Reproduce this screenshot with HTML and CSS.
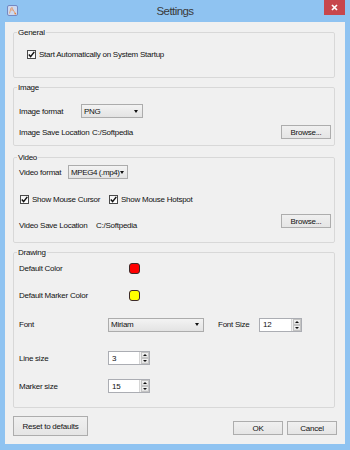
FILE: index.html
```html
<!DOCTYPE html>
<html>
<head>
<meta charset="utf-8">
<title>Settings</title>
<link rel="stylesheet" href="styles.css">
</head>
<body>
<div class="window">
  <div class="titlebar">
    <span class="app-icon">
      <svg width="11" height="11" viewBox="0 0 11 11">
        <rect x="0.5" y="0.5" width="10" height="10" rx="1.5" fill="#cdd9ef" stroke="#7488c2"/>
        <path d="M2.5 8.5 L4 3 L5.5 2.5 M4 5 L6 5 M5 3 L8 8" fill="none" stroke="#e59a6a" stroke-width="0.9"/>
        <circle cx="8.3" cy="8.6" r="0.9" fill="#e8833a"/>
      </svg>
    </span>
    <span class="title">Settings</span>
    <span class="close">
      <svg width="7" height="7" viewBox="0 0 7 7"><path d="M1 1 L6 6 M6 1 L1 6" stroke="#fff" stroke-width="1.7"/></svg>
    </span>
  </div>
  <div class="client">
    <fieldset class="group g-general">
      <legend>General</legend>
      <div class="row indent">
        <span class="check"><svg width="7" height="7" viewBox="0 0 7 7"><path d="M0.8 3.6 L2.6 5.6 L6.3 0.9" fill="none" stroke="#111" stroke-width="1.5"/></svg></span>
        <span>Start Automatically on System Startup</span>
      </div>
    </fieldset>

    <fieldset class="group g-image">
      <legend>Image</legend>
      <div class="row">
        <span class="lbl w62">Image format</span>
        <span class="combo w62"><span>PNG</span><span class="arrow"></span></span>
      </div>
      <div class="row r-gap7">
        <span class="lbl w73">Image Save Location</span>
        <span>C:/Softpedia</span>
        <span class="btn push">Browse...</span>
      </div>
    </fieldset>

    <fieldset class="group g-video">
      <legend>Video</legend>
      <div class="row">
        <span class="lbl w49">Video format</span>
        <span class="combo w60 tight"><span>MPEG4 (.mp4)</span><span class="arrow"></span></span>
      </div>
      <div class="row r-gap13 indent1">
        <span class="checkitem w89">
          <span class="check"><svg width="7" height="7" viewBox="0 0 7 7"><path d="M0.8 3.6 L2.6 5.6 L6.3 0.9" fill="none" stroke="#111" stroke-width="1.5"/></svg></span>
          <span>Show Mouse Cursor</span>
        </span>
        <span class="checkitem">
          <span class="check"><svg width="7" height="7" viewBox="0 0 7 7"><path d="M0.8 3.6 L2.6 5.6 L6.3 0.9" fill="none" stroke="#111" stroke-width="1.5"/></svg></span>
          <span>Show Mouse Hotspot</span>
        </span>
      </div>
      <div class="row row-top r-gap8">
        <span class="lbl w77 low">Video Save Location</span>
        <span class="low">C:/Softpedia</span>
        <span class="btn push">Browse...</span>
      </div>
    </fieldset>

    <fieldset class="group g-drawing">
      <legend>Drawing</legend>
      <div class="row">
        <span class="lbl w110">Default Color</span>
        <span class="swatch red"></span>
      </div>
      <div class="row r-gap13">
        <span class="lbl w110">Default Marker Color</span>
        <span class="swatch yellow"></span>
      </div>
      <div class="row h15 r-gap15">
        <span class="lbl w89">Font</span>
        <span class="combo w96 h15"><span>Miriam</span><span class="arrow"></span></span>
        <span class="lbl fontsize">Font Size</span>
        <span class="spin w43 h15"><span class="val">12</span><span class="btns"><span class="up"></span><span class="down"></span></span></span>
      </div>
      <div class="row r-gap19">
        <span class="lbl w89">Line size</span>
        <span class="spin w42"><span class="val">3</span><span class="btns"><span class="up"></span><span class="down"></span></span></span>
      </div>
      <div class="row r-gap14">
        <span class="lbl w89">Marker size</span>
        <span class="spin w42"><span class="val">15</span><span class="btns"><span class="up"></span><span class="down"></span></span></span>
      </div>
    </fieldset>

    <div class="actions">
      <span class="btn reset">Reset to defaults</span>
      <span class="btn ok">OK</span>
      <span class="btn cancel">Cancel</span>
    </div>
  </div>
</div>
</body>
</html>
```

FILE: styles.css
```css
* { box-sizing: border-box; }
html, body { margin: 0; padding: 0; }
body {
  width: 350px;
  height: 450px;
  overflow: hidden;
  font-family: "Liberation Sans", Arial, sans-serif;
  font-size: 8px;
  letter-spacing: -0.25px;
  color: #111;
}
.window {
  width: 350px;
  height: 450px;
  background: #8fc3f1;
  display: flex;
  flex-direction: column;
}
.titlebar {
  height: 22px;
  display: grid;
  grid-template-columns: 1fr auto 1fr;
}
.app-icon {
  justify-self: start;
  margin: 5px 0 0 7px;
  width: 11px;
  height: 11px;
  display: flex;
}
.title {
  font-size: 11.5px;
  letter-spacing: -0.55px;
  color: #3a3a3a;
  line-height: 22px;
}
.close {
  justify-self: end;
  margin-right: 5px;
  width: 21px;
  height: 15px;
  background: #c7464c;
  display: flex;
  align-items: center;
  justify-content: center;
}
.client {
  flex: 1;
  margin: 0 5px 6px;
  background: #f0f0f0;
  padding: 5px 10px 0 8px;
  display: flex;
  flex-direction: column;
}
.group {
  margin: 0;
  border: 1px solid #d8d8d8;
  border-radius: 2px;
  padding: 0 3px 0 5px;
  min-width: 0;
}
legend {
  padding: 0 1px;
  margin-left: -2px;
  line-height: 11px;
  height: 11px;
  font-size: 8px;
}
.g-general { padding-top: 9px; padding-bottom: 16px; }
.g-image { margin-top: 4px; padding-top: 11px; padding-bottom: 6px; }
.g-video { margin-top: 6px; padding-top: 2px; padding-bottom: 11px; }
.g-drawing { margin-top: 4px; padding-top: 3px; padding-bottom: 14px; }

.row {
  display: flex;
  align-items: center;
  height: 14px;
  white-space: nowrap;
}
.row.h15 { height: 15px; }
.row-top { align-items: flex-start; height: 17px; }
.low { margin-top: 7px; line-height: 10px; }
.indent { padding-left: 8px; }
.indent1 { padding-left: 1px; }
.r-gap7 { margin-top: 7px; }
.r-gap8 { margin-top: 8px; }
.r-gap13 { margin-top: 13px; }
.r-gap14 { margin-top: 14px; }
.r-gap15 { margin-top: 15px; }
.r-gap19 { margin-top: 19px; }

.lbl { flex: none; }
.w49 { width: 49px; }
.w62 { width: 62px; }
.w73 { width: 73px; }
.w77 { width: 77px; }
.w89 { width: 89px; }
.w110 { width: 110px; }
.w60 { width: 60px; }
.w96 { width: 96px; }
.w43 { width: 43px; }
.w42 { width: 42px; }
.h15 { height: 15px; }
.push { margin-left: auto; }

.check {
  flex: none;
  width: 9px;
  height: 9px;
  border: 1px solid #4a4a4a;
  background: linear-gradient(#f4f4f4, #ffffff);
  display: flex;
  align-items: center;
  justify-content: center;
  margin-right: 3px;
}
.checkitem {
  display: flex;
  align-items: center;
}

.combo {
  flex: none;
  height: 14px;
  border: 1px solid #acacac;
  background: linear-gradient(#f3f3f3, #e3e3e3);
  display: flex;
  align-items: center;
  justify-content: space-between;
  padding: 0 4px 0 2px;
}
.combo.tight { letter-spacing: -0.4px; padding-right: 3px; }
.arrow {
  width: 0;
  height: 0;
  border-left: 2.5px solid transparent;
  border-right: 2.5px solid transparent;
  border-top: 3px solid #111;
}
.fontsize { margin-left: 14px; width: 41px; }

.spin {
  flex: none;
  height: 14px;
  display: flex;
  border: 1px solid #abadb3;
  background: #fff;
}
.spin .val {
  flex: 1;
  display: flex;
  align-items: center;
  padding-left: 3px;
}
.spin .btns {
  width: 10px;
  display: flex;
  flex-direction: column;
  background: #f0f0f0;
  border-left: 1px solid #d6d6d6;
}
.spin .up, .spin .down {
  flex: 1;
  display: flex;
  align-items: center;
  justify-content: center;
  background: linear-gradient(#f2f2f2, #e2e2e2);
  border: 1px solid #c4c4c4;
  margin: 0 0.5px;
}
.spin .up::after {
  content: "";
  border-left: 2px solid transparent;
  border-right: 2px solid transparent;
  border-bottom: 2.5px solid #111;
}
.spin .down::after {
  content: "";
  border-left: 2px solid transparent;
  border-right: 2px solid transparent;
  border-top: 2.5px solid #111;
}

.swatch {
  flex: none;
  width: 11px;
  height: 11px;
  border: 1px solid #3c2a2a;
  border-radius: 3px;
}
.red { background: #ff0000; }
.yellow { background: #ffff00; }

.btn {
  flex: none;
  width: 50px;
  height: 14px;
  border: 1px solid #adadad;
  background: linear-gradient(#f0f0f0, #e5e5e5);
  display: flex;
  align-items: center;
  justify-content: center;
}
.actions {
  display: flex;
  align-items: flex-end;
  margin-top: 8px;
  margin-right: -2px;
}
.reset { width: 75px; height: 20px; }
.ok { margin-left: auto; margin-bottom: 1px; }
.cancel { margin-left: 4px; margin-bottom: 1px; }
```
